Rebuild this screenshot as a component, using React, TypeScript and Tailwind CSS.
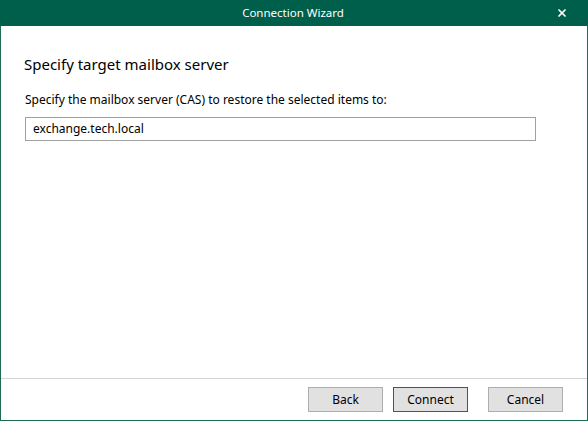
import { X } from "lucide-react";

export default function App() {
  return (
    <div className="w-[588px] h-[421px] flex flex-col bg-white font-['Noto_Sans',sans-serif] text-black">
      {/* Title bar */}
      <div className="h-[26px] bg-[#005f4b] flex items-center relative">
        <div className="flex-1 text-center text-white text-[11.5px] pr-[2px]">Connection Wizard</div>
        <button className="absolute right-[20px] top-[7px] text-white">
          <X className="w-[12px] h-[12px]" strokeWidth={3.5} />
        </button>
      </div>

      {/* Window body */}
      <div className="flex-1 flex flex-col border-x border-b border-[#1e6b55]">
        <div className="flex-1 px-[23px] pt-[27px]">
          <h1 className="text-[15px] leading-[22px]">Specify target mailbox server</h1>
          <p className="mt-[17px] text-[12px] leading-[16px] pl-[1px]">
            Specify the mailbox server (CAS) to restore the selected items to:
          </p>
          <div className="mt-[9px] ml-[1px] w-[511px] h-[24px] border border-[#a0a0a0] flex items-center px-[7px] text-[12px]">
            exchange.tech.local
          </div>
        </div>

        {/* Footer */}
        <div className="h-[42px] border-t border-[#d4d4d4] flex items-start justify-end pt-[8px] pr-[24px]">
          <button className="w-[75px] h-[25px] bg-[#e1e1e1] border border-[#adadad] text-[12px]">Back</button>
          <button className="ml-[10px] w-[75px] h-[25px] bg-[#e1e1e1] border border-[#0067c0] text-[12px]">Connect</button>
          <button className="ml-[20px] w-[75px] h-[25px] bg-[#e1e1e1] border border-[#adadad] text-[12px]">Cancel</button>
        </div>
      </div>
    </div>
  );
}
